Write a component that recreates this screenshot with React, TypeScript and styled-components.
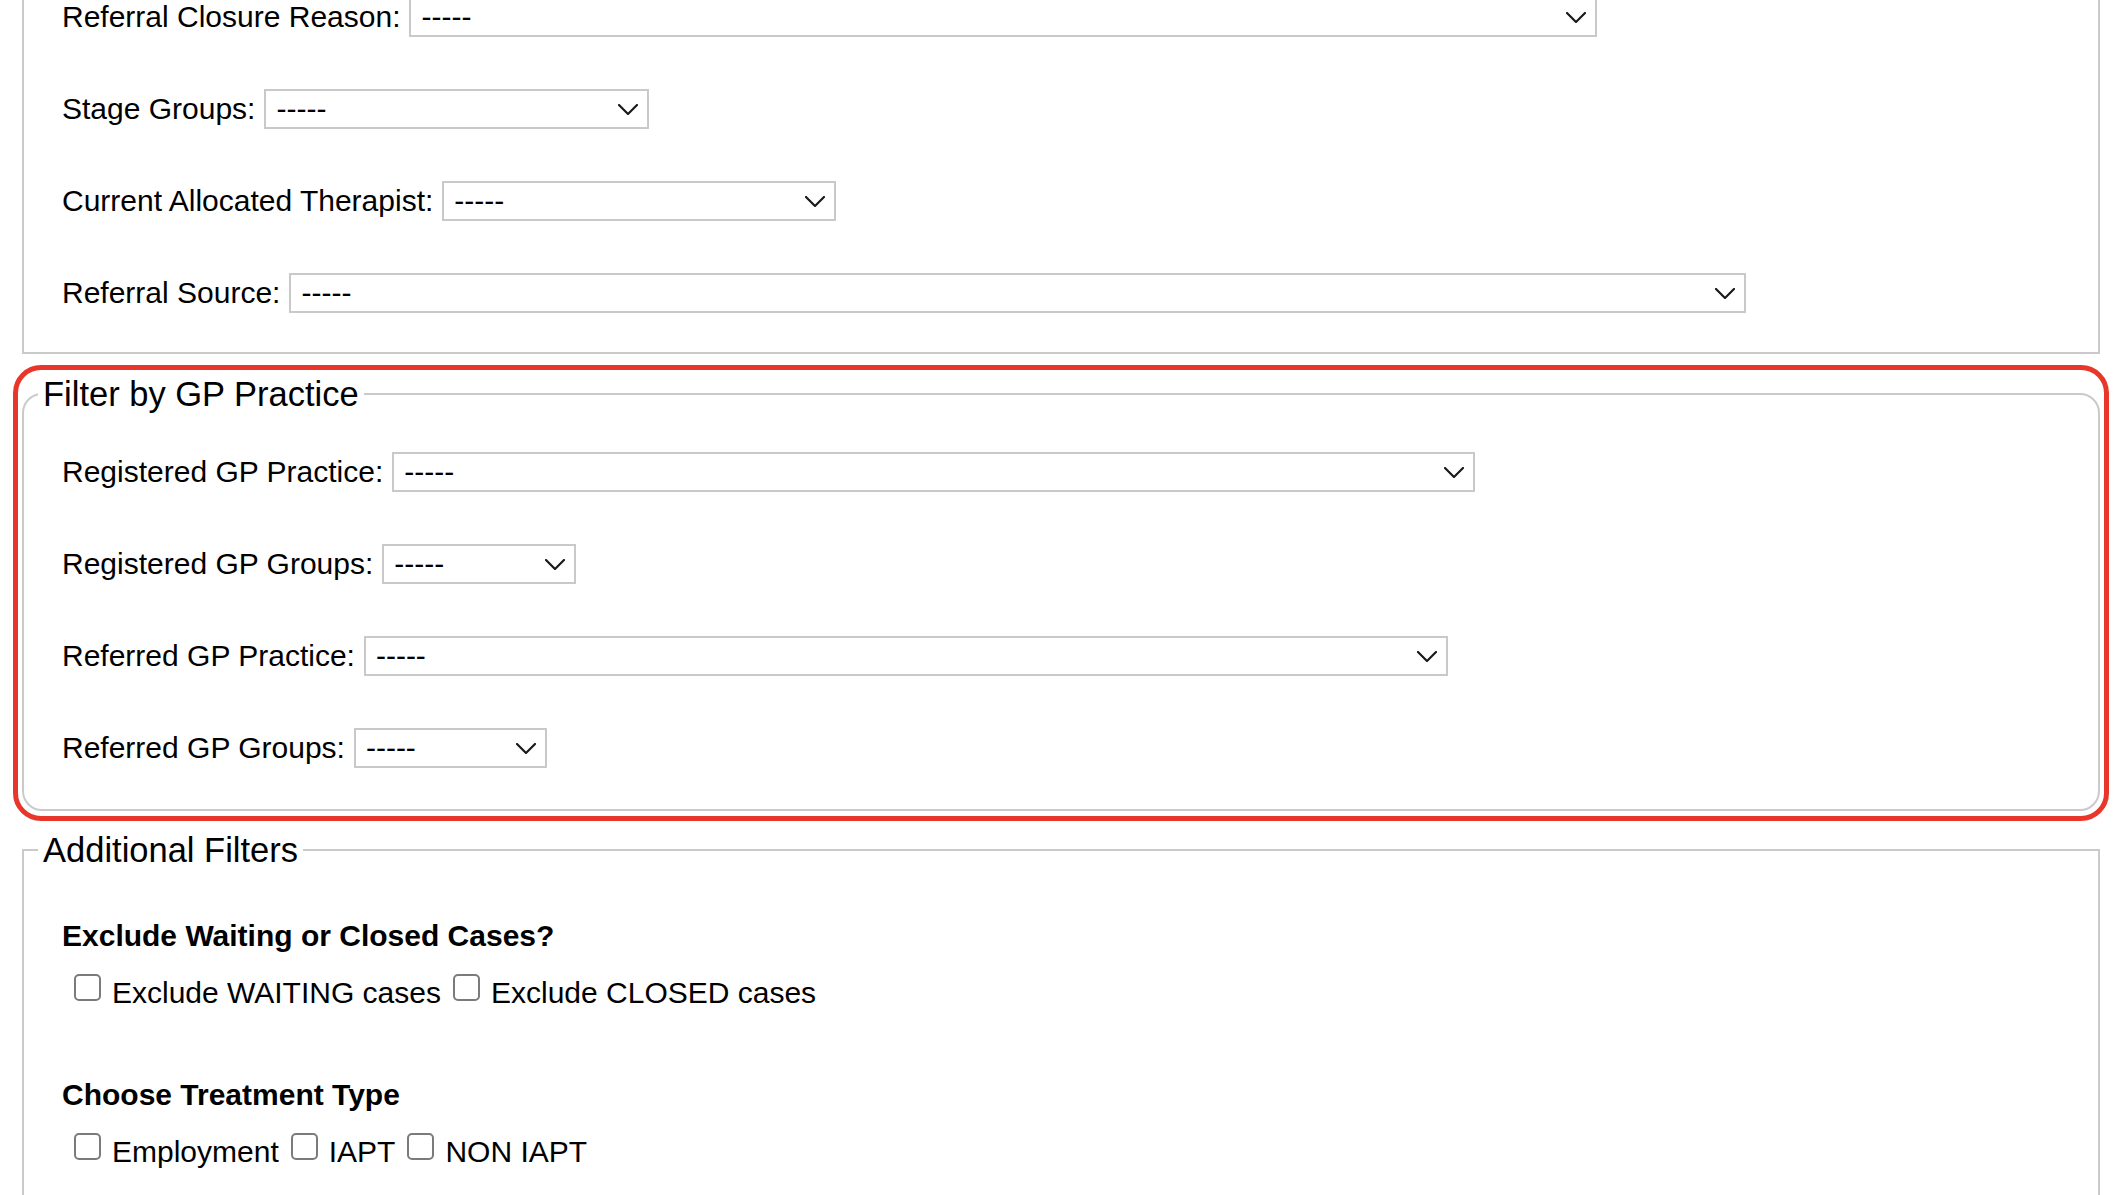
import styled, { createGlobalStyle } from "styled-components";

const GlobalStyle = createGlobalStyle`
    html, body {
        margin: 0;
        padding: 0;
        background: #fff;
    }
    body {
        font-family: "Liberation Sans", Arial, Helvetica, sans-serif;
        color: #000;
        overflow: hidden;
    }
`

interface SelectField {
    label: string
    width: number
}

const Chevron = () => (
    <svg width="20" height="11" viewBox="0 0 20 11" fill="none">
        <polyline points="1,1 10,10 19,1" stroke="#1a1a1a" strokeWidth="2.2" strokeLinecap="round" strokeLinejoin="round" />
    </svg>
)

const SelectRows = ({ fields }: { fields: SelectField[] }) => (
    <FieldList>
        {fields.map(f => (
            <FieldRow key={f.label}>
                <Label>{f.label}</Label>
                <SelectBox $w={f.width}>
                    <span>-----</span>
                    <Chevron />
                </SelectBox>
            </FieldRow>
        ))}
    </FieldList>
)

const App = () => {
    return (
        <>
            <GlobalStyle />
            <Page>
                <Fieldset $cut>
                    <SelectRows fields={data.referral} />
                </Fieldset>

                <Highlight>
                    <Fieldset $rounded>
                        <Legend>Filter by GP Practice</Legend>
                        <SelectRows fields={data.gp} />
                    </Fieldset>
                </Highlight>

                <Fieldset>
                    <Legend>Additional Filters</Legend>
                    <GroupList>
                        {data.groups.map(g => (
                            <div key={g.title}>
                                <GroupTitle>{g.title}</GroupTitle>
                                <CheckRow>
                                    {g.options.map(o => (
                                        <CheckOption key={o}>
                                            <Check />
                                            {o}
                                        </CheckOption>
                                    ))}
                                </CheckRow>
                            </div>
                        ))}
                    </GroupList>
                </Fieldset>
            </Page>
        </>
    )
}

const data = {
    referral: [
        { label: 'Referral Closure Reason:', width: 1188 },
        { label: 'Stage Groups:', width: 385 },
        { label: 'Current Allocated Therapist:', width: 394 },
        { label: 'Referral Source:', width: 1457 },
    ],
    gp: [
        { label: 'Registered GP Practice:', width: 1083 },
        { label: 'Registered GP Groups:', width: 194 },
        { label: 'Referred GP Practice:', width: 1084 },
        { label: 'Referred GP Groups:', width: 193 },
    ],
    groups: [
        { title: 'Exclude Waiting or Closed Cases?', options: ['Exclude WAITING cases', 'Exclude CLOSED cases'] },
        { title: 'Choose Treatment Type', options: ['Employment', 'IAPT', 'NON IAPT'] },
    ],
}

export default App;

const Page = styled.div`
    margin: -3px 24px 0 22px;
`

const Fieldset = styled.fieldset<{ $rounded?: boolean; $cut?: boolean }>`
    margin: 0;
    min-width: 0;
    border: 2px solid #cacaca;
    border-radius: ${({ $rounded }) => $rounded ? '20px' : '0'};
    padding: 38px 38px ${({ $rounded }) => $rounded ? '41px' : '39px'} 38px;
    ${({ $cut }) => $cut ? 'border-top: none; padding-top: 0;' : ''}
`

const Legend = styled.legend`
    font-size: 34.5px;
    line-height: 40px;
    padding: 0 5px;
    margin-left: -24px;
`

const Highlight = styled.div`
    margin: 11px -9px 9px -9px;
    padding: 4px 4px 5px 4px;
    border: 5px solid #e8372a;
    border-radius: 28px;
`

const FieldList = styled.div`
    display: flex;
    flex-direction: column;
    align-items: flex-start;
    gap: 52px;
`

const FieldRow = styled.div`
    display: flex;
    align-items: center;
    height: 40px;
    font-size: 30px;
`

const Label = styled.label`
    white-space: pre;
    margin-right: 9px;
`

const SelectBox = styled.div<{ $w: number }>`
    box-sizing: border-box;
    width: ${({ $w }) => $w}px;
    height: 40px;
    display: flex;
    align-items: center;
    justify-content: space-between;
    padding: 0 9px 0 10px;
    border: 2px solid #c9c9c9;
    background: #fff;
    font-size: 30px;
    svg {
        flex: none;
    }
`

const GroupList = styled.div`
    display: flex;
    flex-direction: column;
    gap: 68px;
    padding-top: 11px;
`

const GroupTitle = styled.div`
    font-size: 30px;
    font-weight: bold;
    line-height: 34px;
    margin-bottom: 23px;
`

const CheckRow = styled.div`
    display: flex;
    align-items: center;
    height: 34px;
    font-size: 30px;
    line-height: 34px;
`

const CheckOption = styled.label`
    display: inline-flex;
    align-items: center;
    white-space: pre;
`

const Check = styled.input.attrs({ type: 'checkbox' })`
    appearance: none;
    -webkit-appearance: none;
    box-sizing: border-box;
    flex: none;
    width: 27px;
    height: 27px;
    margin: 0 11px 12px 12px;
    border: 2px solid #7b7b7b;
    border-radius: 5px;
    background: #fff;
`
